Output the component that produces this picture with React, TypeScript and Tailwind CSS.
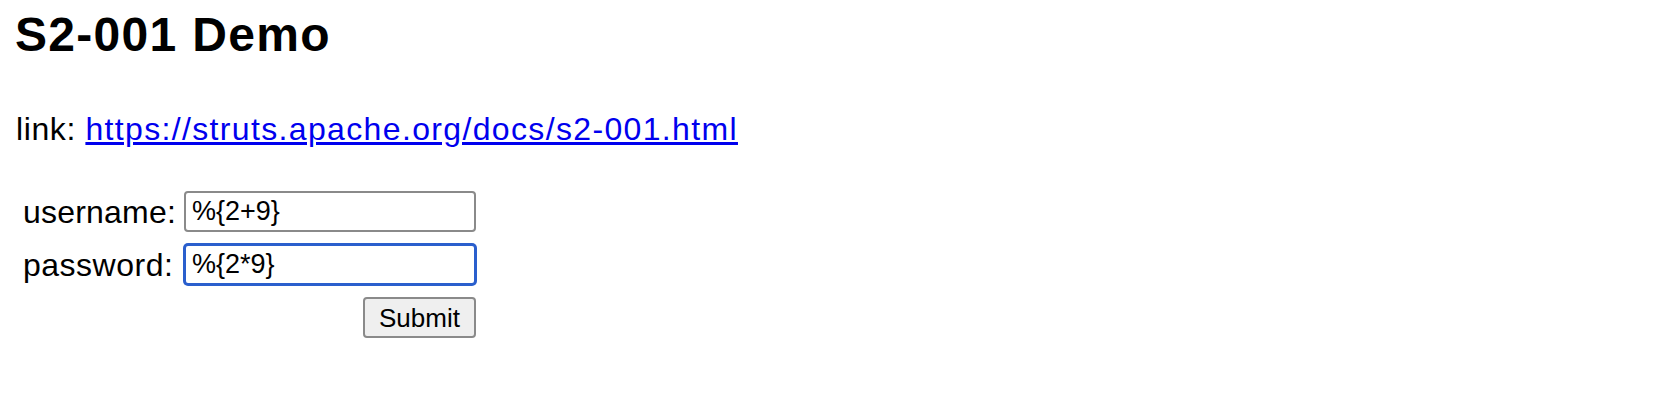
import React from 'react';

const App = () => {
  return (
    <div className="min-h-screen bg-white px-4 pt-[7px] text-black font-['Liberation_Sans',Arial,sans-serif]">
      {/* Page title */}
      <h1 className="-ml-px text-[48px] font-bold leading-[56px] tracking-[1.3px]">S2-001 Demo</h1>

      <p className="mt-[48px] text-[32px] leading-[36px] tracking-[0.6px]">
        link:{' '}
        <a href="https://struts.apache.org/docs/s2-001.html" className="text-[#0000ee] underline tracking-[1.35px]">
          https://struts.apache.org/docs/s2-001.html
        </a>
      </p>

      {/* Login form, laid out like the struts xhtml table */}
      <form
        className="mt-[44px] grid grid-cols-[161px_292px] items-center gap-y-3 pl-[7px]"
        onSubmit={(e) => e.preventDefault()}
      >
        <label htmlFor="username" className="text-[32px] leading-[36px] tracking-[0.2px]">
          username:
        </label>
        <input
          id="username"
          type="text"
          defaultValue="%{2+9}"
          className="h-[41px] w-[292px] rounded-[4px] border-2 border-[#8a8a8a] bg-white px-[6px] text-[27px] text-black outline-none font-['Liberation_Sans',Arial,sans-serif]"
        />

        <label htmlFor="password" className="text-[32px] leading-[36px] tracking-[0.5px]">
          password:
        </label>
        <input
          id="password"
          type="text"
          defaultValue="%{2*9}"
          className="h-[41px] w-[292px] rounded-[4px] border-2 border-[#2a5fcd] bg-white px-[6px] text-[27px] text-black outline-none ring-1 ring-[#2a5fcd] font-['Liberation_Sans',Arial,sans-serif]"
        />

        <div></div>
        <div className="flex justify-end">
          <button
            type="submit"
            className="h-[41px] w-[113px] rounded-[4px] border-2 border-[#8a8a8a] bg-[#efefef] text-[26px] text-black font-['Liberation_Sans',Arial,sans-serif]"
          >
            Submit
          </button>
        </div>
      </form>
    </div>
  );
};

export default App;
